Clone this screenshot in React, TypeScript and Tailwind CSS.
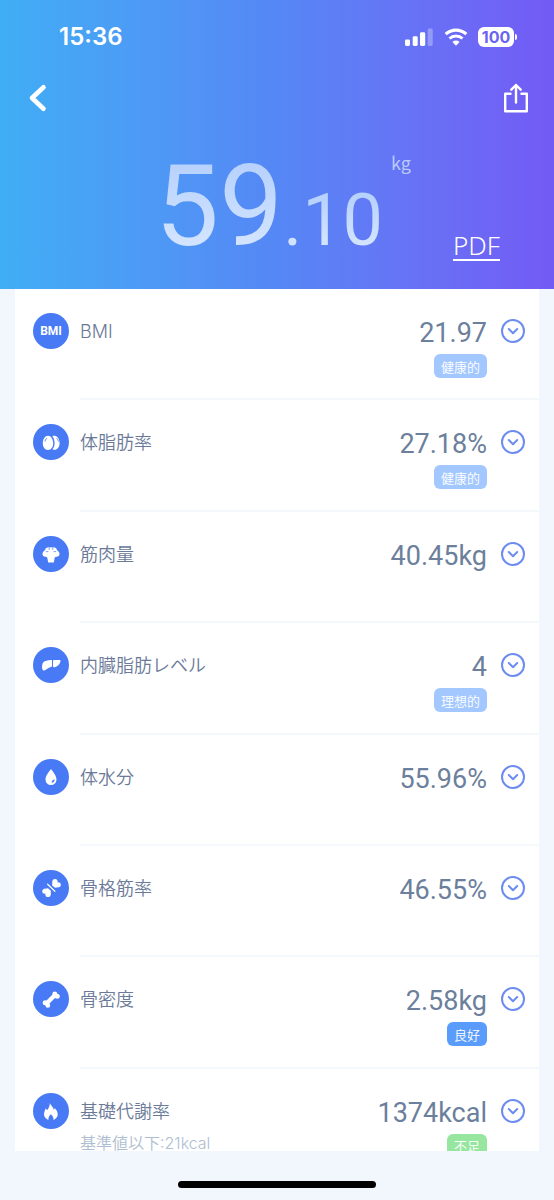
import React, { useState } from 'react';

type Tone = 'light' | 'blue' | 'green';

interface Metric {
    id: string;
    label: string;
    value: string;
    note?: string;
    badge?: string;
    tone?: Tone;
    icon: React.ReactNode;
}

const toneClass: Record<Tone, string> = {
    light: 'bg-[#a3c8ff]',
    blue: 'bg-[#5a9cfc]',
    green: 'bg-[#96e6a0]',
};

const Glyph: React.FC<{ children: React.ReactNode }> = ({ children }) => (
    <svg viewBox="0 0 36 36" className="size-9" fill="#fff" aria-hidden="true">
        {children}
    </svg>
);

const metrics: Metric[] = [
    {
        id: 'bmi',
        label: 'BMI',
        value: '21.97',
        badge: '健康的',
        tone: 'light',
        icon: <span className="font-['Roboto',sans-serif] text-[12px] leading-none font-bold text-white">BMI</span>,
    },
    {
        id: 'fat',
        label: '体脂肪率',
        value: '27.18%',
        badge: '健康的',
        tone: 'light',
        icon: (
            <Glyph>
                <path d="M15 11.7c3 0 5.2 3.4 5.2 7.6 0 4-2.2 6.7-5.2 6.7s-5.2-2.7-5.2-6.7c0-4.2 2.2-7.6 5.2-7.6z" />
                <path d="M19.3 12.2c.8-.5 1.5-.6 2.3-.5 2.9.3 5 3.4 5 7.3 0 4-2.1 6.7-5 6.8-.9 0-1.5-.2-2.2-.6 1.3-1.3 2.2-3.4 2.2-6 0-2.8-.9-5.4-2.3-7z" />
                <path d="M12.1 17.2c.2-1.3.8-2.3 1.7-2.9M24 14.5c.8.7 1.2 1.6 1.3 2.7" fill="none" stroke="#487af5" strokeWidth="0.9" strokeLinecap="round" />
            </Glyph>
        ),
    },
    {
        id: 'muscle',
        label: '筋肉量',
        value: '40.45kg',
        icon: (
            <Glyph>
                <path d="M13 12l3.200-1 1.800.6 1.800-.6 3.200 1 1.300 2.500c1.400.9 2.200 2.200 2.200 3.500 0 1.700-1.300 2.700-2.800 2.700-.9 0-1.700.2-2 1l-.9 4.800h-5.600l-.9-4.800c-.3-.8-1.100-1-2-1-1.500 0-2.800-1-2.800-2.700 0-1.300.8-2.600 2.200-3.500z" />
                <path d="M16.200 11v2.600M19.800 11v2.600M13.200 15.600h1.800M21 15.600h1.800" fill="none" stroke="#487af5" strokeWidth="0.7" strokeLinecap="round" />
            </Glyph>
        ),
    },
    {
        id: 'visceral',
        label: '内臓脂肪レベル',
        value: '4',
        badge: '理想的',
        tone: 'light',
        icon: (
            <Glyph>
                <path d="M12.5 13.9c2-.7 4-.9 5.8-.9.6 0 .7.3.7.9v4.9c0 .7-.3 1-1 1.200-1.900.5-3.400 1.200-4.800 2.500-1.100 1.100-2.800 1.400-3.500.4-.8-1.100-.8-3.500-.4-5.400.4-1.900 1.500-3 3.200-3.600z" />
                <path d="M20 13.9c0-.6.3-.9.9-.9h5.3c1 0 1.5.5 1.3 1.3-.6 2.7-2.5 5.3-5.7 5.9-1.200.2-1.800-.2-1.800-1.300z" />
            </Glyph>
        ),
    },
    {
        id: 'water',
        label: '体水分',
        value: '55.96%',
        icon: (
            <Glyph>
                <path d="M18 10c2.2 3 5.5 6.7 5.5 10.5a5.5 5.5 0 0 1-11 0C12.5 16.7 15.8 13 18 10z" />
                <path d="M18.5 23.7c.1-1.8 1.4-3.1 3.3-3.2-.2 1.8-1.5 3.1-3.3 3.2z" fill="#487af5" />
            </Glyph>
        ),
    },
    {
        id: 'skeletal',
        label: '骨格筋率',
        value: '46.55%',
        icon: (
            <Glyph>
                <circle cx="22" cy="11.5" r="2.6" />
                <circle cx="25.3" cy="14.8" r="2.5" />
                <path d="M19.6 11.2l-.6 4 3 2.6 4.500-.7-.9-3z" />
                <circle cx="11.8" cy="21.2" r="2.5" />
                <circle cx="15" cy="24.4" r="2.6" />
                <path d="M10.6 19l4.400-.7 3 2.700-.5 4-3.500-1z" />
                <path d="M14.6 14.2l7.300 7.100" fill="none" stroke="#fff" strokeWidth="1.2" strokeLinecap="round" />
            </Glyph>
        ),
    },
    {
        id: 'bone',
        label: '骨密度',
        value: '2.58kg',
        badge: '良好',
        tone: 'blue',
        icon: (
            <Glyph>
                <path d="M14 22l8-8" stroke="#fff" strokeWidth="4.2" />
                <circle cx="21.8" cy="12.8" r="2.4" />
                <circle cx="24.2" cy="15.2" r="2.5" />
                <circle cx="12.2" cy="21.8" r="2.5" />
                <circle cx="14.8" cy="24.4" r="2.4" />
            </Glyph>
        ),
    },
    {
        id: 'bmr',
        label: '基礎代謝率',
        value: '1374kcal',
        note: '基準値以下:21kcal',
        badge: '不足',
        tone: 'green',
        icon: (
            <Glyph>
                <path d="M16.8 9.7c.4 2.7 3.7 3.9 4 7.2.6-.6.8-1.3.8-2 2 1.900 3.100 4.200 3.100 6.300 0 2.900-1.900 4.800-4.300 5.700.3-2.400-.7-4.200-2.500-5.600-1.600 1.300-2.800 3.200-2.500 5.600-2.300-.9-4.400-2.800-4.400-5.600 0-2.300 1.100-3.900 1.500-5.900.8.5 1.300 1.100 1.600 1.900 1.600-1.900 2.700-4.500 2.700-7.600z" />
            </Glyph>
        ),
    },
];

const StatusBar: React.FC = () => (
    <div className="flex h-[74px] items-center justify-between pr-[37px] pl-[59px] text-white">
        <span className="font-['Inter',sans-serif] text-2xl leading-none font-semibold">15:36</span>
        <div className="flex items-center">
            <svg viewBox="0 0 28 18" className="mr-[11px] h-[18px] w-7" fill="currentColor" aria-hidden="true">
                <rect x="0" y="11.5" width="5" height="6.5" rx="1.4" />
                <rect x="7.7" y="8.2" width="5" height="9.8" rx="1.4" />
                <rect x="15" y="4.3" width="5.2" height="13.7" rx="1.4" />
                <rect x="22.7" y="0.5" width="5" height="17.5" rx="1.4" opacity="0.3" />
            </svg>
            <svg viewBox="0 0 24 18" className="mr-[10px] h-[18px] w-6" fill="none" stroke="currentColor" aria-hidden="true">
                <path d="M1.7 6.2a14.8 14.8 0 0 1 20.6 0" strokeWidth="3.2" />
                <path d="M5.5 10.5a9.4 9.4 0 0 1 13 0" strokeWidth="3" />
                <path d="M12 17.8l-3.6-3.9a5.1 5.1 0 0 1 7.2 0z" fill="currentColor" stroke="none" />
            </svg>
            <div className="flex items-center gap-px">
                <span className="flex h-5 w-9 items-center justify-center rounded-md bg-white font-['Inter',sans-serif] text-base leading-none font-bold text-[#6a63f4]">
                    100
                </span>
                <span className="h-[6px] w-[2px] rounded-r-full bg-white" />
            </div>
        </div>
    </div>
);

const MetricRow: React.FC<{ metric: Metric }> = ({ metric }) => {
    const [open, setOpen] = useState(false);

    return (
        <li className="flex pl-[18px]">
            <div className="mt-6 flex size-9 shrink-0 items-center justify-center rounded-full bg-[#487af5]">
                {metric.icon}
            </div>
            <div className="ml-[11px] flex flex-1 border-b-2 border-[#f4f7fc] pt-6 pr-[14px]">
                <div className="flex-1 font-['Inter','Noto_Sans_CJK_JP',sans-serif] font-[350]">
                    <div className="text-[18px] leading-[38px] text-[#6b7a99]">{metric.label}</div>
                    {metric.note && <div className="text-base leading-6 text-[#aebdd0]">{metric.note}</div>}
                </div>
                <div className="mr-[14px] flex flex-col items-end">
                    <div className="font-['Roboto',sans-serif] text-[27px] leading-[41px] text-[#6c7f9c]">
                        {metric.value}
                    </div>
                    {metric.badge && metric.tone && (
                        <span className={`flex h-6 items-center rounded-md px-[7px] font-['Noto_Sans_CJK_JP',sans-serif] text-[13px] leading-none font-[350] text-white ${toneClass[metric.tone]}`}>
                            {metric.badge}
                        </span>
                    )}
                </div>
                <button type="button" aria-label={metric.label} aria-expanded={open} onClick={() => setOpen(!open)} className="mt-[6px] size-6">
                    <svg viewBox="0 0 24 24" className="size-6" fill="none" stroke="#6c8cf0" strokeWidth="2" strokeLinecap="round" strokeLinejoin="round">
                        <circle cx="12" cy="12" r="11" />
                        <path d="M7.8 10l4.2 4.2L16.2 10" />
                    </svg>
                </button>
            </div>
        </li>
    );
};

const App: React.FC = () => {
    return (
        <div className="flex h-screen flex-col bg-[#f2f7fe]">
            <header className="h-[289px] shrink-0 bg-linear-to-r from-[#40aef5] via-[#5587f5] to-[#735af5]">
                <StatusBar />
                <nav className="flex h-12 items-center justify-between pr-[25px] pl-[28px] text-white">
                    <button type="button" aria-label="戻る">
                        <svg viewBox="0 0 20 28" className="h-7 w-5" fill="none" stroke="currentColor" strokeWidth="4.6" strokeLinecap="round" strokeLinejoin="round">
                            <path d="M15.5 3.3L4 14l11.5 10.7" />
                        </svg>
                    </button>
                    <button type="button" aria-label="共有">
                        <svg viewBox="0 0 26 30" className="h-[30px] w-[26px]" fill="none" stroke="currentColor" strokeWidth="2.4" strokeLinecap="round" strokeLinejoin="round">
                            <path d="M7.5 10.8H2.2v17.4h21.6V10.8h-5.3" />
                            <path d="M13 19.5V2M8.3 6.7L13 2l4.7 4.7" />
                        </svg>
                    </button>
                </nav>
                <div className="grid grid-cols-[1fr_auto_1fr] pl-3">
                    <div className="col-start-2 flex items-baseline text-white">
                        <span className="bg-linear-to-b from-[#a9c8fc] to-[#e2eeff] bg-clip-text font-['Roboto',sans-serif] text-[114px] leading-[168px] text-transparent">59</span>
                        <span className="bg-linear-to-b from-[#a9c8fc] to-[#e2eeff] bg-clip-text font-['Roboto',sans-serif] text-[72px] leading-[100px] text-transparent">.10</span>
                        <span className="ml-2 self-start pt-6 font-['Noto_Sans_CJK_JP',sans-serif] text-lg leading-8 text-[#b9c9fb]">kg</span>
                    </div>
                    <a href="#pdf" className="mr-[54px] mb-[29px] self-end justify-self-end border-b-2 border-white font-['Noto_Sans',sans-serif] text-[26px] leading-[28px] font-[350] text-white">
                        PDF
                    </a>
                </div>
            </header>
            <main className="mx-[15px] min-h-0 flex-1 overflow-hidden bg-white">
                <ul className="grid h-[891px] auto-rows-fr">
                    {metrics.map((metric) => (
                        <MetricRow key={metric.id} metric={metric} />
                    ))}
                </ul>
            </main>
            <footer className="flex h-[49px] shrink-0 items-end justify-center pb-3">
                <div className="h-[7px] w-[198px] rounded-full bg-black" />
            </footer>
        </div>
    );
};

export default App;
